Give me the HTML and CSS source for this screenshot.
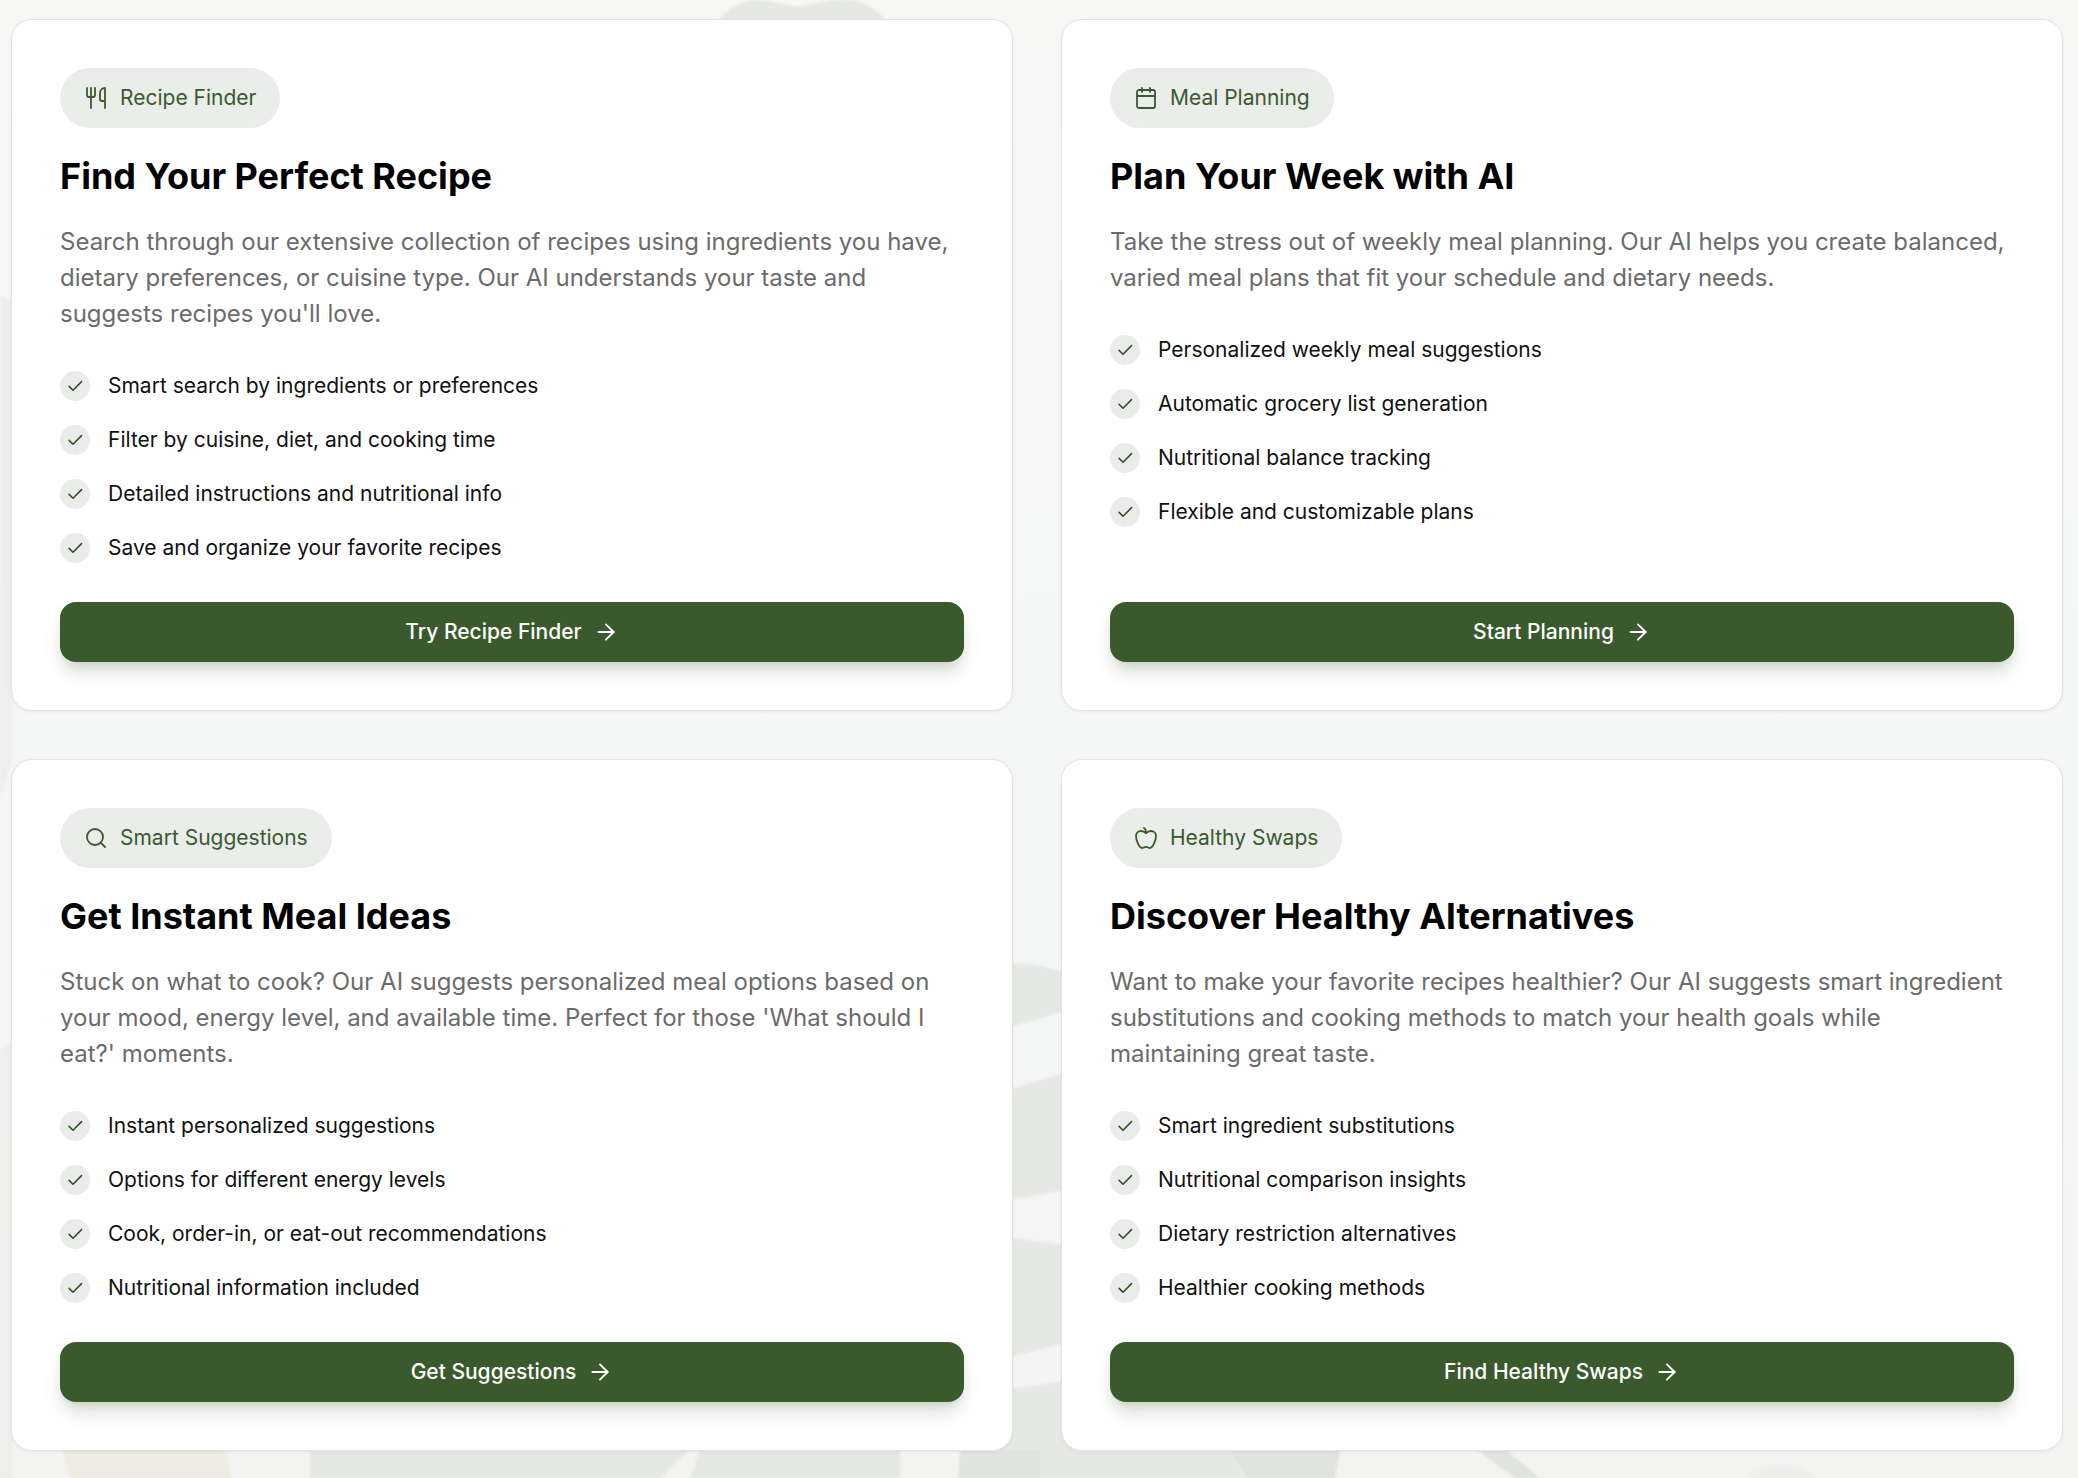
FILE: index.html
```html
<!DOCTYPE html>
<html lang="en">

<head>
  <meta charset="UTF-8">
  <meta name="viewport" content="width=device-width, initial-scale=1.0">
  <title>AI Kitchen Features</title>
  <link rel="stylesheet" href="styles.css">
</head>

<body>
  <!-- faded plant photo behind the cards -->
  <svg class="backdrop" viewBox="0 0 2078 1478" preserveAspectRatio="none" aria-hidden="true">
    <path class="leaf" d="M715 24 C728 8 740 0 758 0 C775 1 785 6 798 6 C815 5 830 -2 852 0 C868 3 880 12 888 24Z" />
    <path class="leaf-pale" d="M0 295 L12 300 L12 760 L0 800Z" />
    <path class="leaf-pale" d="M0 1050 L12 1040 L12 1478 L0 1478Z" />
    <path class="leaf" d="M1000 963 C1030 962 1050 968 1075 975 L1075 1008 L1000 1030Z" />
    <path class="leaf" d="M1000 1092 L1075 1070 L1075 1188 L1000 1202Z" />
    <path class="leaf" d="M1000 1236 L1075 1247 L1075 1340 L1000 1360Z" />
    <path class="leaf" d="M1000 1390 L1075 1380 L1075 1478 L1000 1478Z" />
    <path class="straw" d="M62 1450 L226 1450 L232 1478 L70 1478Z" />
    <path class="leaf" d="M310 1450 L462 1450 L440 1478 L310 1478Z" />
    <path class="leaf" d="M462 1450 L690 1450 L660 1478 L430 1478Z" />
    <path class="leaf" d="M700 1450 L900 1450 L900 1478 L690 1478Z" />
    <path class="leaf-dark" d="M960 1450 L1040 1450 L1040 1478 L958 1478Z" />
    <path class="leaf" d="M1040 1450 L1230 1450 L1245 1478 L1040 1478Z" />
    <path class="leaf-dark" d="M1230 1450 L1340 1450 L1335 1478 L1246 1478Z" />
    <path class="leaf-dark" d="M1477 1450 L1506 1450 L1540 1478 L1515 1478Z" />
    <path class="leaf-pale" d="M1748 1478 C1760 1462 1800 1458 1815 1478Z" />
  </svg>

  <main class="grid">
    <section class="card">
      <div class="pill">
        <svg class="pill-icon" viewBox="0 0 24 24"><path d="M3 2v7c0 1.1.9 2 2 2h4a2 2 0 0 0 2-2V2" /><path d="M7 2v20" /><path d="M21 15V2a5 5 0 0 0-5 5v6c0 1.1.9 2 2 2h3Zm0 0v7" /></svg>
        <span>Recipe Finder</span>
      </div>
      <h2>Find Your Perfect Recipe</h2>
      <p class="desc">Search through our extensive collection of recipes using ingredients you have, dietary preferences, or cuisine type. Our AI understands your taste and suggests recipes you'll love.</p>
      <ul class="features">
        <li><span class="tick"><svg viewBox="0 0 24 24"><path d="M20 6 9 17l-5-5" /></svg></span>Smart search by ingredients or preferences</li>
        <li><span class="tick"><svg viewBox="0 0 24 24"><path d="M20 6 9 17l-5-5" /></svg></span>Filter by cuisine, diet, and cooking time</li>
        <li><span class="tick"><svg viewBox="0 0 24 24"><path d="M20 6 9 17l-5-5" /></svg></span>Detailed instructions and nutritional info</li>
        <li><span class="tick"><svg viewBox="0 0 24 24"><path d="M20 6 9 17l-5-5" /></svg></span>Save and organize your favorite recipes</li>
      </ul>
      <a class="btn" href="#">Try Recipe Finder <svg viewBox="0 0 24 24"><path d="M5 12h14" /><path d="m12 5 7 7-7 7" /></svg></a>
    </section>

    <section class="card">
      <div class="pill">
        <svg class="pill-icon" viewBox="0 0 24 24"><path d="M8 2v4" /><path d="M16 2v4" /><rect x="3" y="4" width="18" height="18" rx="2" /><path d="M3 10h18" /></svg>
        <span>Meal Planning</span>
      </div>
      <h2>Plan Your Week with AI</h2>
      <p class="desc">Take the stress out of weekly meal planning. Our AI helps you create balanced, varied meal plans that fit your schedule and dietary needs.</p>
      <ul class="features">
        <li><span class="tick"><svg viewBox="0 0 24 24"><path d="M20 6 9 17l-5-5" /></svg></span>Personalized weekly meal suggestions</li>
        <li><span class="tick"><svg viewBox="0 0 24 24"><path d="M20 6 9 17l-5-5" /></svg></span>Automatic grocery list generation</li>
        <li><span class="tick"><svg viewBox="0 0 24 24"><path d="M20 6 9 17l-5-5" /></svg></span>Nutritional balance tracking</li>
        <li><span class="tick"><svg viewBox="0 0 24 24"><path d="M20 6 9 17l-5-5" /></svg></span>Flexible and customizable plans</li>
      </ul>
      <a class="btn" href="#">Start Planning <svg viewBox="0 0 24 24"><path d="M5 12h14" /><path d="m12 5 7 7-7 7" /></svg></a>
    </section>

    <section class="card">
      <div class="pill">
        <svg class="pill-icon" viewBox="0 0 24 24"><circle cx="11" cy="11" r="8" /><path d="m21 21-4.3-4.3" /></svg>
        <span>Smart Suggestions</span>
      </div>
      <h2>Get Instant Meal Ideas</h2>
      <p class="desc">Stuck on what to cook? Our AI suggests personalized meal options based on your mood, energy level, and available time. Perfect for those 'What should I eat?' moments.</p>
      <ul class="features">
        <li><span class="tick"><svg viewBox="0 0 24 24"><path d="M20 6 9 17l-5-5" /></svg></span>Instant personalized suggestions</li>
        <li><span class="tick"><svg viewBox="0 0 24 24"><path d="M20 6 9 17l-5-5" /></svg></span>Options for different energy levels</li>
        <li><span class="tick"><svg viewBox="0 0 24 24"><path d="M20 6 9 17l-5-5" /></svg></span>Cook, order-in, or eat-out recommendations</li>
        <li><span class="tick"><svg viewBox="0 0 24 24"><path d="M20 6 9 17l-5-5" /></svg></span>Nutritional information included</li>
      </ul>
      <a class="btn" href="#">Get Suggestions <svg viewBox="0 0 24 24"><path d="M5 12h14" /><path d="m12 5 7 7-7 7" /></svg></a>
    </section>

    <section class="card">
      <div class="pill">
        <svg class="pill-icon" viewBox="0 0 24 24"><path d="M12 20.94c1.5 0 2.75 1.06 4 1.06 3 0 6-8 6-12.22A4.91 4.91 0 0 0 17 5c-2.22 0-4 1.44-5 2-1-.56-2.78-2-5-2a4.9 4.9 0 0 0-5 4.78C2 14 5 22 8 22c1.25 0 2.5-1.06 4-1.06Z" /><path d="M10 2c1 .5 2 2 2 5" /></svg>
        <span>Healthy Swaps</span>
      </div>
      <h2>Discover Healthy Alternatives</h2>
      <p class="desc">Want to make your favorite recipes healthier? Our AI suggests smart ingredient substitutions and cooking methods to match your health goals while maintaining great taste.</p>
      <ul class="features">
        <li><span class="tick"><svg viewBox="0 0 24 24"><path d="M20 6 9 17l-5-5" /></svg></span>Smart ingredient substitutions</li>
        <li><span class="tick"><svg viewBox="0 0 24 24"><path d="M20 6 9 17l-5-5" /></svg></span>Nutritional comparison insights</li>
        <li><span class="tick"><svg viewBox="0 0 24 24"><path d="M20 6 9 17l-5-5" /></svg></span>Dietary restriction alternatives</li>
        <li><span class="tick"><svg viewBox="0 0 24 24"><path d="M20 6 9 17l-5-5" /></svg></span>Healthier cooking methods</li>
      </ul>
      <a class="btn" href="#">Find Healthy Swaps <svg viewBox="0 0 24 24"><path d="M5 12h14" /><path d="m12 5 7 7-7 7" /></svg></a>
    </section>
  </main>
</body>

</html>
```

FILE: styles.css
```css
* {
  box-sizing: border-box;
}

html,
body {
  height: 100%;
}

body {
  margin: 0;
  overflow: hidden;
  position: relative;
  font-family: Inter, "Liberation Sans", sans-serif;
  background: linear-gradient(180deg, #f7f7f6, #f4f6f6 55%, #f3f4f2);
  color: #111;
}

svg {
  fill: none;
  stroke: currentColor;
  stroke-linecap: round;
  stroke-linejoin: round;
}

.backdrop {
  position: absolute;
  inset: 0;
  width: 100%;
  height: 100%;
  stroke: none;
  filter: blur(1px);
}

.leaf {
  fill: #e5e8e3;
}

.leaf-pale {
  fill: #eeefec;
}

.leaf-dark {
  fill: #e0e3de;
}

.straw {
  fill: #eeece3;
}

.grid {
  position: relative;
  display: grid;
  grid-template-columns: 1fr 1fr;
  column-gap: 48px;
  row-gap: 48px;
  padding: 19px 15px 0 11px;
}

.card {
  display: flex;
  flex-direction: column;
  align-items: flex-start;
  padding: 48px;
  background-color: rgba(255, 255, 255, 0.98);
  border: 1px solid #e1e4e0;
  border-radius: 21px;
  box-shadow: 0 1px 3px rgba(58, 90, 46, 0.08);
}

.pill {
  display: inline-flex;
  align-items: center;
  gap: 12px;
  height: 60px;
  padding: 0 24px 1px;
  border-radius: 30px;
  background-color: #ebedeb;
  color: #3a5a2e;
  font-size: 21px;
}

.pill-icon {
  width: 24px;
  height: 24px;
  stroke-width: 1.8;
}

h2 {
  margin: 25px 0;
  font-size: 36px;
  font-weight: 700;
  line-height: 46px;
  color: #000;
}

.desc {
  margin: 0 0 38px;
  font-size: 24px;
  line-height: 36px;
  color: #6b6b6b;
}

.features {
  display: flex;
  flex-direction: column;
  gap: 22px;
  margin: 0 0 38px;
  padding: 0;
  list-style: none;
  font-size: 21px;
  line-height: 32px;
}

.features li {
  display: flex;
  align-items: center;
  gap: 18px;
}

.tick {
  display: flex;
  align-items: center;
  justify-content: center;
  width: 30px;
  height: 30px;
  border-radius: 50%;
  background-color: #e9ece8;
  color: #2f5024;
}

.tick svg {
  width: 18.67px;
  height: 18.67px;
  stroke-width: 2;
}

.btn {
  display: flex;
  align-items: center;
  justify-content: center;
  gap: 11px;
  width: 100%;
  height: 60px;
  margin-top: auto;
  padding-bottom: 1px;
  border-radius: 16px;
  background-color: #3a5a2e;
  color: #fff;
  font-size: 21px;
  font-weight: 500;
  text-decoration: none;
  box-shadow: 0 13px 20px -4px rgba(58, 90, 46, 0.22), 0 5px 8px -3px rgba(58, 90, 46, 0.12);
}

.btn svg {
  width: 26px;
  height: 26px;
  stroke-width: 1.8;
}
```
